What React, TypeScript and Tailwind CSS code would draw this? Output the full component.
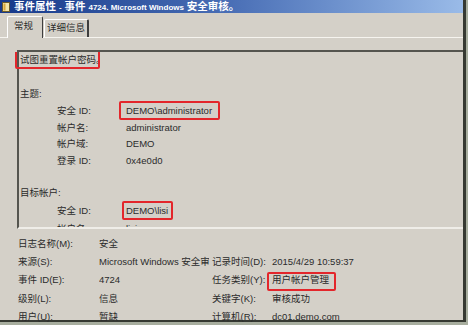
const font = {
  fontFamily: '"Liberation Sans", "Noto Sans CJK SC", sans-serif',
};

const Mark = ({ cls }: { cls: string }) => (
  <span
    className={`absolute border-2 border-[#e3262b] rounded-[2px] pointer-events-none ${cls}`}
  />
);

const Field = ({
  label,
  value,
  h,
  mark,
}: {
  label: string;
  value: string;
  h: string;
  mark?: string;
}) => (
  <div className={`flex items-center ${h}`}>
    <span className="w-[106px] pl-[37px] shrink-0">{label}</span>
    <span className="relative">
      {value}
      {mark && <Mark cls={mark} />}
    </span>
  </div>
);

const Info = ({
  l1,
  v1,
  l2,
  v2,
  mark,
}: {
  l1: string;
  v1: string;
  l2?: string;
  v2?: string;
  mark?: boolean;
}) => (
  <div className="flex items-center h-[18.2px] whitespace-nowrap">
    <span className="w-[99px] pl-[18px] shrink-0">{l1}</span>
    <span className="w-[110px] mr-[3px] shrink-0 overflow-hidden">{v1}</span>
    {l2 && <span className="w-[60px] shrink-0">{l2}</span>}
    {v2 && (
      <span className="relative">
        {v2}
        {mark && <Mark cls="left-[-5px] top-[-1px] w-[69px] h-[19px]" />}
      </span>
    )}
  </div>
);

const App = () => {
  return (
    <div className="w-[468px] h-[325px] bg-[#a8ae9f] overflow-hidden" style={font}>
      <div className="w-[466px] h-[322px] bg-[#d4d0c8] border-r-[3px] border-b-[2px] border-[#363932] flex flex-col text-[9.5px] text-[#2b2b2b]">
        {/* title bar */}
        <div className="h-[13px] shrink-0 bg-linear-to-r from-[#17398a] via-[#4a6fb6] to-[#9abbe8] flex items-center pl-[2px] gap-[4px]">
          <svg width="8" height="10" viewBox="0 0 8 10">
            <rect x="0.5" y="0.5" width="7" height="9" fill="#f4e6a8" stroke="#6b5b2a" />
            <rect x="1.5" y="1.5" width="2" height="7" fill="#d9a63a" />
          </svg>
          <span className="text-white font-bold text-[10.5px] whitespace-nowrap leading-none">
            事件属性 <span className="text-[8px]">-</span> 事件{" "}
            <span className="text-[8px]">4724. Microsoft Windows</span> 安全审核。
          </span>
        </div>

        {/* tabs */}
        <div className="flex items-end h-[24px] pl-[7px] shrink-0">
          <div className="relative z-10 mb-[-1px] w-[36px] h-[22px] bg-[#d4d0c8] border-t border-l border-white border-r border-r-[#3e3e3e] rounded-t-[2px] flex items-center pl-[6px] pb-[3px]">
            常规
          </div>
          <div className="w-[45px] h-[18px] ml-[1px] border-t border-l border-white border-r-2 border-r-[#3e3e3e] rounded-t-[2px] flex items-center justify-center">
            详细信息
          </div>
        </div>

        {/* tab page */}
        <div className="flex-1 border-t border-[#f6f4ef] flex flex-col">
          <div className="mt-[12px] ml-[17px] h-[179px] shrink-0 border-t-2 border-l-2 border-[#55554f] border-b-2 border-b-[#efede8]">
            <div className="h-full overflow-y-clip pl-[1px] whitespace-nowrap">
              <div className="h-[17px] flex items-center">
                <span className="relative">
                  试图重置帐户密码。
                  <Mark cls="left-[-5px] top-[-3px] w-[85px] h-[19px]" />
                </span>
              </div>
              <div className="h-[17px] mt-[17px] flex items-center">主题:</div>
              <Field
                label="安全 ID:"
                value="DEMO\administrator"
                h="h-[16.5px]"
                mark="left-[-7px] top-[-3px] w-[101px] h-[19px]"
              />
              <Field label="帐户名:" value="administrator" h="h-[16.5px]" />
              <Field label="帐户域:" value="DEMO" h="h-[16.5px]" />
              <Field label="登录 ID:" value="0x4e0d0" h="h-[16.5px]" />
              <div className="h-[17px] mt-[16px] flex items-center">目标帐户:</div>
              <Field
                label="安全 ID:"
                value="DEMO\lisi"
                h="h-[18px]"
                mark="left-[-4px] top-[-3px] w-[51px] h-[19px]"
              />
              <Field label="帐户名:" value="lisi" h="h-[18px]" />
            </div>
          </div>

          <div className="mt-[6px] flex flex-col">
            <Info l1="日志名称(M):" v1="安全" />
            <Info
              l1="来源(S):"
              v1="Microsoft Windows 安全审核"
              l2="记录时间(D):"
              v2="2015/4/29 10:59:37"
            />
            <Info l1="事件 ID(E):" v1="4724" l2="任务类别(Y):" v2="用户帐户管理" mark />
            <Info l1="级别(L):" v1="信息" l2="关键字(K):" v2="审核成功" />
            <Info l1="用户(U):" v1="暂缺" l2="计算机(R):" v2="dc01.demo.com" />
          </div>
        </div>
      </div>
    </div>
  );
};

export default App;
